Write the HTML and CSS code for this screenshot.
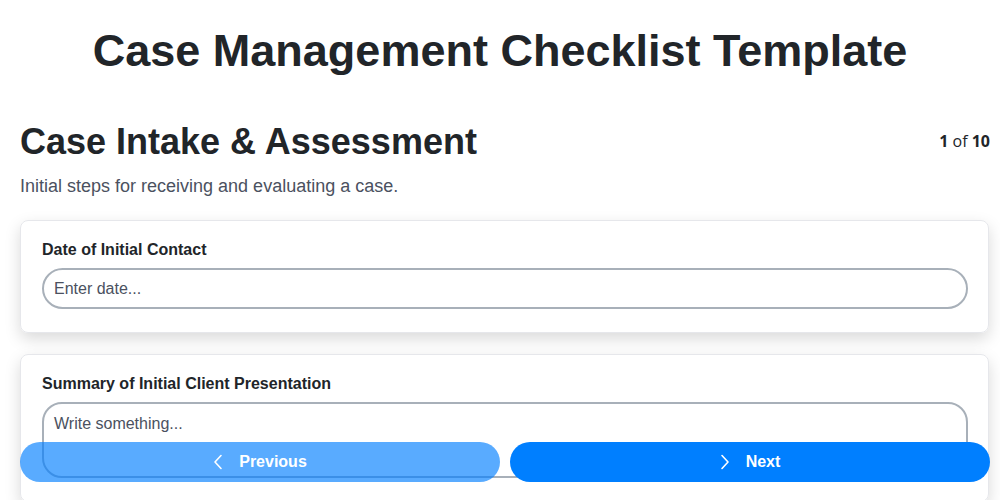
FILE: index.html
```html
<!DOCTYPE html>
<html lang="en">
<head>
    <meta charset="UTF-8">
    <meta name="viewport" content="width=device-width, initial-scale=1.0">
    <title>Case Management Checklist Template</title>
    <link rel="stylesheet" href="styles.css">
</head>
<body>
    <h1 class="page-title">Case Management Checklist Template</h1>

    <div class="page">
        <div class="step-header">
            <h2>Case Intake &amp; Assessment</h2>
            <div class="step-count"><b>1</b> of <b>10</b></div>
        </div>
        <p class="step-desc">Initial steps for receiving and evaluating a case.</p>

        <div class="field-card">
            <label for="contact-date">Date of Initial Contact</label>
            <input type="text" id="contact-date" placeholder="Enter date...">
        </div>

        <div class="field-card">
            <label for="summary">Summary of Initial Client Presentation</label>
            <textarea id="summary" rows="2" placeholder="Write something..."></textarea>
        </div>
    </div>

    <div class="nav-buttons">
        <button class="nav-btn" disabled>
            <svg width="10" height="16" viewBox="0 0 10 16"><path d="M8 1.5 L2 8 L8 14.5" fill="none" stroke="currentColor" stroke-width="1.6" stroke-linecap="round" stroke-linejoin="round"/></svg>
            Previous
        </button>
        <button class="nav-btn">
            <svg width="10" height="16" viewBox="0 0 10 16"><path d="M2 1.5 L8 8 L2 14.5" fill="none" stroke="currentColor" stroke-width="1.6" stroke-linecap="round" stroke-linejoin="round"/></svg>
            Next
        </button>
    </div>
</body>
</html>
```

FILE: styles.css
```css
body {
    margin: 0;
    background: #ffffff;
    color: #212529;
    font-family: 'Liberation Sans', Arial, sans-serif;
}

.page-title {
    margin: 0;
    padding: 26px 20px 44px;
    font-size: 45px;
    line-height: 1.1;
    text-align: center;
}

.page {
    padding: 0 10px 80px 20px;
}

.step-header {
    display: flex;
    justify-content: space-between;
    align-items: center;
}

.step-header h2 {
    margin: 0;
    font-size: 36px;
    line-height: 1.2;
}

.step-count {
    font-family: 'Open Sans', sans-serif;
    font-size: 16px;
}

.step-desc {
    margin: 10px 0 20px;
    color: #4b5160;
    font-size: 18px;
    line-height: 1.5;
}

.field-card {
    display: flex;
    flex-direction: column;
    margin-right: 1px;
    margin-bottom: 21px;
    padding: 17px 20px 23px 21px;
    border: 1px solid #e6e7eb;
    border-radius: 8px;
    box-shadow: 0 6px 16px rgba(0, 0, 0, 0.15);
}

.field-card label {
    margin-bottom: 6px;
    font-size: 16px;
    font-weight: bold;
    line-height: 24px;
}

.field-card input,
.field-card textarea {
    padding: 7px 10px;
    border: 2px solid #a8b0b9;
    color: #212529;
    font-family: inherit;
    font-size: 16px;
    line-height: 23px;
    outline: none;
}

.field-card input {
    border-radius: 999px;
}

.field-card textarea {
    height: 76px;
    box-sizing: border-box;
    padding-top: 8px;
    border-radius: 20px;
    resize: none;
}

::placeholder {
    color: #4b5160;
    opacity: 1;
}

.nav-buttons {
    position: fixed;
    left: 20px;
    right: 10px;
    bottom: 18px;
    display: flex;
    gap: 10px;
}

.nav-btn {
    flex: 1;
    display: flex;
    justify-content: center;
    align-items: center;
    gap: 16px;
    height: 40px;
    border: none;
    border-radius: 999px;
    background: #007fff;
    color: #ffffff;
    font-family: 'Liberation Sans', Arial, sans-serif;
    font-size: 16px;
    font-weight: bold;
    cursor: pointer;
}

.nav-btn:disabled {
    opacity: 0.65;
    cursor: not-allowed;
}
```
